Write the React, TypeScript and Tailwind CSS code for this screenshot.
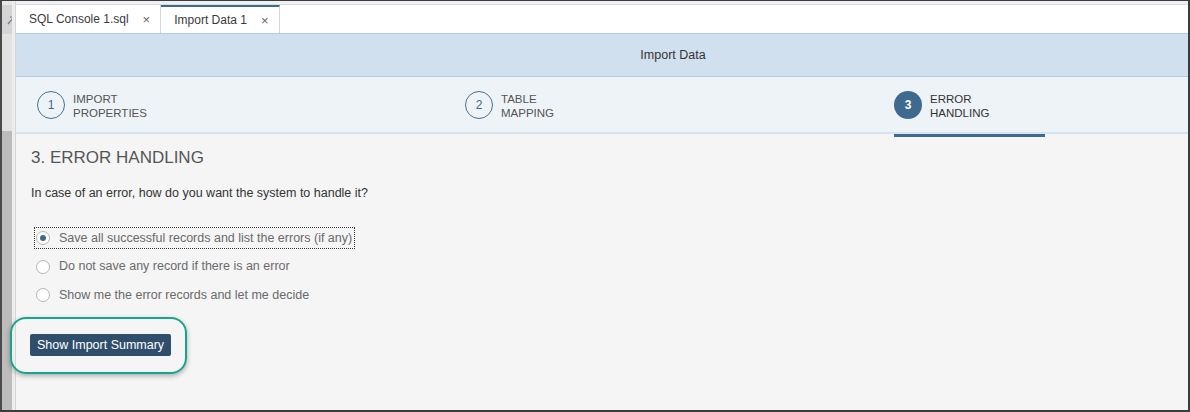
import React from 'react';

const font = { fontFamily: '"Liberation Sans", Arial, sans-serif' };

const steps = [
    { n: 1, top: 'IMPORT', bottom: 'PROPERTIES', active: false },
    { n: 2, top: 'TABLE', bottom: 'MAPPING', active: false },
    { n: 3, top: 'ERROR', bottom: 'HANDLING', active: true },
];

const options = [
    { label: 'Save all successful records and list the errors (if any)', checked: true },
    { label: 'Do not save any record if there is an error', checked: false },
    { label: 'Show me the error records and let me decide', checked: false },
];

function Tab({ title, active }: { title: string; active?: boolean }) {
    return (
        <div
            className={`flex h-full items-center gap-[14px] border-r border-[#d6d6d6] bg-white pl-[13px] pr-[10px] text-[12px] text-[#3a3a3a] ${
                active ? 'border-t-2 border-t-[#3d6a8f]' : ''
            }`}
        >
            <span>{title}</span>
            <span className="text-[13px] leading-none text-[#666]">×</span>
        </div>
    );
}

function Step({ n, top, bottom, active }: { n: number; top: string; bottom: string; active: boolean }) {
    return (
        <div className="flex items-center gap-[8px]">
            <div
                className={`flex size-[28px] items-center justify-center rounded-full text-[12px] ${
                    active ? 'bg-[#3f6a8f] font-bold text-white' : 'border border-[#4a6f91] text-[#3f6a8f]'
                }`}
            >
                {n}
            </div>
            <div className={`pt-[2px] text-[11.5px] leading-[14px] ${active ? 'text-[#333]' : 'text-[#555]'}`}>
                <div>{top}</div>
                <div>{bottom}</div>
            </div>
        </div>
    );
}

function Radio({ label, checked }: { label: string; checked: boolean }) {
    return (
        <div className="flex h-[28.5px] items-center">
            <div
                className={`-ml-[1px] flex h-[20px] items-center gap-[9px] pl-[1px] pr-[2px] ${
                    checked ? 'outline outline-1 outline-dotted outline-[#333]' : ''
                }`}
            >
                <span className="flex size-[14px] items-center justify-center rounded-full border border-[#b5b5b5] bg-white">
                    {checked && <span className="size-[6px] rounded-full bg-[#3f6a8f]" />}
                </span>
                <span className="text-[12.5px] text-[#6a6a6a]">{label}</span>
            </div>
        </div>
    );
}

export default function App() {
    return (
        <div style={font} className="flex h-[412px] w-[1190px] overflow-hidden border-t border-r-2 border-b-2 border-[#3c3c3c] bg-white">
            {/* left gutter */}
            <div className="flex w-[15px] shrink-0 border-l-2 border-[#4a4a4a] bg-[#ededed]">
                <div className="flex w-[10px] flex-col">
                    <div className="h-[4px] bg-[#e6e6e6]" />
                    <div className="flex h-[29px] items-center justify-end overflow-hidden bg-[#d4d4d4]">
                        <svg width="8" height="10" viewBox="0 0 8 10" className="-mr-[3px]">
                            <path d="M1 9 L7 2 M7 2 L3 2 M7 2 L7 6" stroke="#6a7d8f" strokeWidth="1.2" fill="none" />
                        </svg>
                    </div>
                    <div className="h-[97px] bg-[#e2e2e2]" />
                    <div className="flex-1 bg-[#bcbcbc]" />
                </div>
            </div>

            <div className="relative flex min-w-0 flex-1 flex-col border-l border-[#d5d5d5]">
                <div className="h-[4px] shrink-0 border-b border-[#d9dbe0] bg-[#eef0f4]" />

                {/* tabs */}
                <div className="flex h-[28px] shrink-0 bg-white">
                    <Tab title="SQL Console 1.sql" />
                    <Tab title="Import Data 1" active />
                </div>

                {/* header */}
                <div className="flex h-[44px] shrink-0 items-center justify-center border-y border-[#b6cce2] bg-[#d1e0ee] pl-[142px] text-[12.5px] text-[#333]">
                    Import Data
                </div>

                {/* steps */}
                <div className="grid h-[57px] shrink-0 grid-cols-[428px_429px_1fr] border-b-2 border-[#d6e4f1] bg-[#eef3f8] pl-[21px]">
                    {steps.map((s) => (
                        <Step key={s.n} {...s} />
                    ))}
                </div>

                <div className="flex flex-1 flex-col bg-[#f5f5f5] pl-[15px]">
                    <div className="-ml-[15px] grid h-[3px] grid-cols-[428px_429px_1fr] pl-[21px]">
                        <div />
                        <div />
                        <div className="w-[151px] bg-[#3f6a8f]" />
                    </div>
                    <h2 className="mt-[10px] text-[17px] leading-[22px] text-[#555]">3. ERROR HANDLING</h2>
                    <p className="mt-[16px] text-[12.5px] leading-[16px] text-[#333]">
                        In case of an error, how do you want the system to handle it?
                    </p>
                    <div className="mt-[23px] flex flex-col pl-[5px]">
                        {options.map((o) => (
                            <Radio key={o.label} {...o} />
                        ))}
                    </div>

                    <div className="relative z-10 mt-[7px] -ml-[21px] flex h-[57px] w-[177px] items-center rounded-[16px] border-[2.5px] border-[#16a58a] pl-[18px] shadow-[0_2px_5px_rgba(0,0,0,0.3)]">
                        <button className="h-[22px] rounded-[2px] bg-[#2f4e6b] px-[7px] text-[12.5px] text-white">
                            Show Import Summary
                        </button>
                    </div>
                </div>
            </div>
        </div>
    );
}
